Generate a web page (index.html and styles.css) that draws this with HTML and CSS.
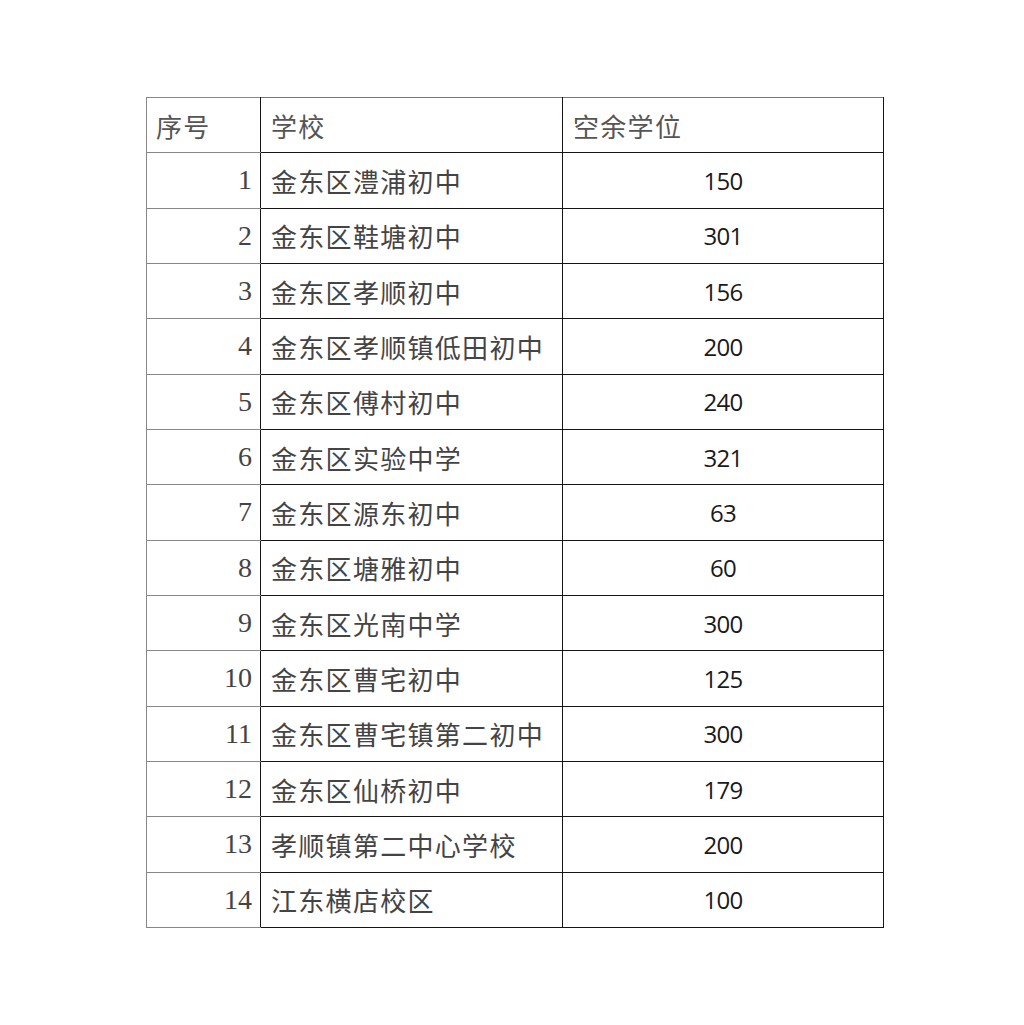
FILE: index.html
```html
<!DOCTYPE html>
<html lang="zh">
<head>
<meta charset="utf-8">
<title>空余学位</title>
<link rel="stylesheet" href="styles.css">
</head>
<body>
<div class="page">
<table class="seats">
  <thead>
    <tr><th class="c-no">序号</th><th class="c-school">学校</th><th class="c-seat">空余学位</th></tr>
  </thead>
  <tbody>
    <tr><td class="c-no">1</td><td class="c-school">金东区澧浦初中</td><td class="c-seat">150</td></tr>
    <tr><td class="c-no">2</td><td class="c-school">金东区鞋塘初中</td><td class="c-seat">301</td></tr>
    <tr><td class="c-no">3</td><td class="c-school">金东区孝顺初中</td><td class="c-seat">156</td></tr>
    <tr><td class="c-no">4</td><td class="c-school">金东区孝顺镇低田初中</td><td class="c-seat">200</td></tr>
    <tr><td class="c-no">5</td><td class="c-school">金东区傅村初中</td><td class="c-seat">240</td></tr>
    <tr><td class="c-no">6</td><td class="c-school">金东区实验中学</td><td class="c-seat">321</td></tr>
    <tr><td class="c-no">7</td><td class="c-school">金东区源东初中</td><td class="c-seat">63</td></tr>
    <tr><td class="c-no">8</td><td class="c-school">金东区塘雅初中</td><td class="c-seat">60</td></tr>
    <tr><td class="c-no">9</td><td class="c-school">金东区光南中学</td><td class="c-seat">300</td></tr>
    <tr><td class="c-no">10</td><td class="c-school">金东区曹宅初中</td><td class="c-seat">125</td></tr>
    <tr><td class="c-no">11</td><td class="c-school">金东区曹宅镇第二初中</td><td class="c-seat">300</td></tr>
    <tr><td class="c-no">12</td><td class="c-school">金东区仙桥初中</td><td class="c-seat">179</td></tr>
    <tr><td class="c-no">13</td><td class="c-school">孝顺镇第二中心学校</td><td class="c-seat">200</td></tr>
    <tr><td class="c-no">14</td><td class="c-school">江东横店校区</td><td class="c-seat">100</td></tr>
  </tbody>
</table>
</div>
</body>
</html>
```
FILE: styles.css
```css
html, body {
  margin: 0;
  padding: 0;
  background: #ffffff;
}
.page {
  padding: 97px 0 0 146px;
}
.seats {
  border-collapse: collapse;
  table-layout: fixed;
  width: 737px;
  font-family: "Noto Sans CJK SC", sans-serif;
  color: #222;
}
.seats th,
.seats td {
  height: 55.33px;
  padding: 0;
  border: 1px solid #151515;
  box-sizing: border-box;
  white-space: nowrap;
  vertical-align: middle;
  overflow: hidden;
}
.seats th {
  font-weight: 400;
  font-size: 26px;
  letter-spacing: 1.3px;
  text-align: left;
  color: #555;
  border-top-color: #777;
}
.seats .c-no {
  width: 114px;
  border-left-color: #888;
  border-top-color: #888;
  border-bottom-color: #888;
}
.seats .c-school {
  width: 302px;
}
.seats .c-seat {
  width: 321px;
}
.seats th.c-no {
  padding-left: 9px;
}
.seats th.c-school,
.seats td.c-school {
  padding-left: 10px;
}
.seats th.c-seat {
  padding-left: 10px;
}
.seats td.c-no {
  text-align: right;
  padding-right: 8px;
  font-family: "Liberation Serif", "Noto Sans CJK SC", serif;
  font-size: 28px;
  color: #444;
}
.seats td.c-school {
  font-size: 26px;
  letter-spacing: 1.3px;
  color: #444;
}
.seats td.c-seat {
  text-align: center;
  font-family: "Open Sans", "Liberation Sans", sans-serif;
  font-size: 24px;
  letter-spacing: -0.8px;
  color: #1a1a1a;
}
```
